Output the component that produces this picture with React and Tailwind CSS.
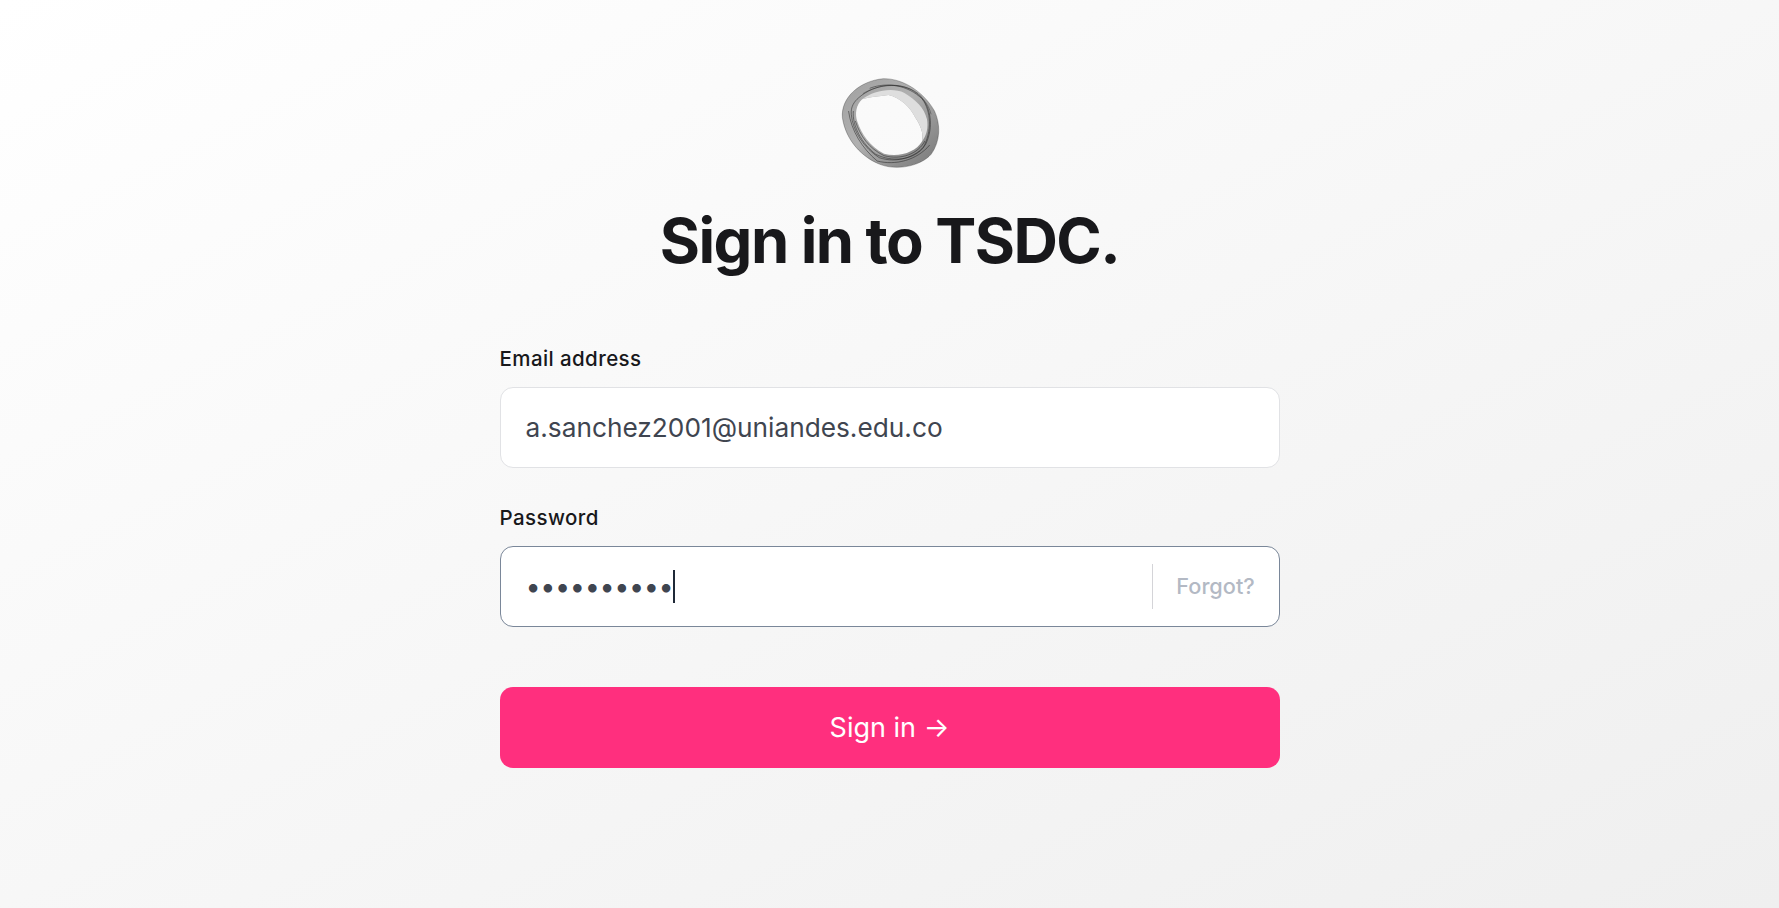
const Logo = () => (
  <svg width="104" height="95" viewBox="60 35 305 285" preserveAspectRatio="none" className="block ml-[2px]">
    <defs>
      <linearGradient id="ringFill" x1="0" y1="0" x2="1" y2="1">
        <stop offset="0" stopColor="#a0a0a0" />
        <stop offset="0.45" stopColor="#b0b0b0" />
        <stop offset="1" stopColor="#767676" />
      </linearGradient>
    </defs>
    {/* Ring body */}
    <path
      fillRule="evenodd"
      fill="url(#ringFill)"
      d="M190 43C250 42 310 85 340 140C358 180 358 230 330 270C300 305 230 320 180 300C130 280 80 230 70 160C65 100 120 50 190 43ZM128 105C110 122 106 150 114 172C126 208 150 245 192 268C238 280 285 262 303 232C310 205 297 180 284 160C270 130 240 100 205 92C175 96 150 98 128 105Z"
    />
    {/* Light band, upper right */}
    <path
      fill="#dedede"
      d="M128 105C160 80 215 68 252 86C286 108 310 130 318 165C322 190 318 212 303 232C310 205 297 180 284 160C270 130 240 100 205 92C175 96 150 98 128 105Z"
    />
    {/* Inner strands */}
    <g fill="none" stroke="#1c1c1c" strokeWidth="1.6" opacity="0.9">
      <path d="M118 100C165 58 240 48 292 88C332 125 338 190 314 240C288 278 230 298 178 280C134 252 100 200 96 150C94 128 104 112 118 100Z" />
      <path d="M150 72C200 52 262 62 304 104C330 140 334 200 306 252C274 288 215 294 168 270C126 238 98 182 102 140" />
      <path d="M88 140C96 200 128 252 172 290C225 304 288 288 326 242" />
      <path d="M190 43C250 42 310 85 340 140C358 180 358 230 330 270C300 305 230 320 180 300C130 280 80 230 70 160C65 100 120 50 190 43Z" strokeWidth="1.2" opacity="0.8" />
      <path d="M108 170C122 215 148 252 192 274C244 288 292 268 312 230" />
      <path d="M130 88C175 60 235 55 275 78C312 104 324 125 330 150" strokeWidth="1.2" />
    </g>
  </svg>
);

const labelClass = 'text-[20.5px] leading-[24px] font-medium tracking-[0.02em] text-[#18181b]';

export default function App() {
  return (
    <div className="h-screen overflow-hidden bg-gradient-to-br from-white to-[#efefef] font-['Inter',sans-serif] flex flex-col items-center pt-[76px]">
      <Logo />

      <h1 className="mt-[34px] text-[61.5px] leading-[72px] font-bold tracking-[-0.025em] text-[#18181b]">
        Sign in to TSDC.
      </h1>

      <form className="w-[780px] mt-[70px] flex flex-col">
        {/* Email */}
        <label className={labelClass}>Email address</label>
        <div className="mt-[16px] h-[81px] flex items-center px-[25px] bg-white rounded-[13px] border border-[#e1e2e5]">
          <span className="text-[26.25px] leading-[36px] text-[#3f4550]">a.sanchez2001@uniandes.edu.co</span>
        </div>

        {/* Password */}
        <label className={`${labelClass} mt-[38px]`}>Password</label>
        <div className="mt-[16px] h-[81px] flex items-center bg-white rounded-[13px] border border-[#7a8799] pl-[25px]">
          <div className="flex-1 flex items-center">
            <span className="text-[27px] leading-[36px] text-[#3f4550] tracking-[-0.015em]">••••••••••</span>
            <span className="w-[2px] h-[33px] bg-[#1f2937]" />
          </div>
          <div className="w-px h-[45px] bg-[#d4d4d8]" />
          <span className="w-[126px] text-center text-[21.7px] font-medium text-[#b3b9c4]">Forgot?</span>
        </div>

        {/* Submit */}
        <button
          type="button"
          className="mt-[60px] h-[81px] pt-px rounded-[13px] bg-[#ff2f7e] text-white text-[27px] flex items-center justify-center"
        >
          Sign in →
        </button>
      </form>
    </div>
  );
}
